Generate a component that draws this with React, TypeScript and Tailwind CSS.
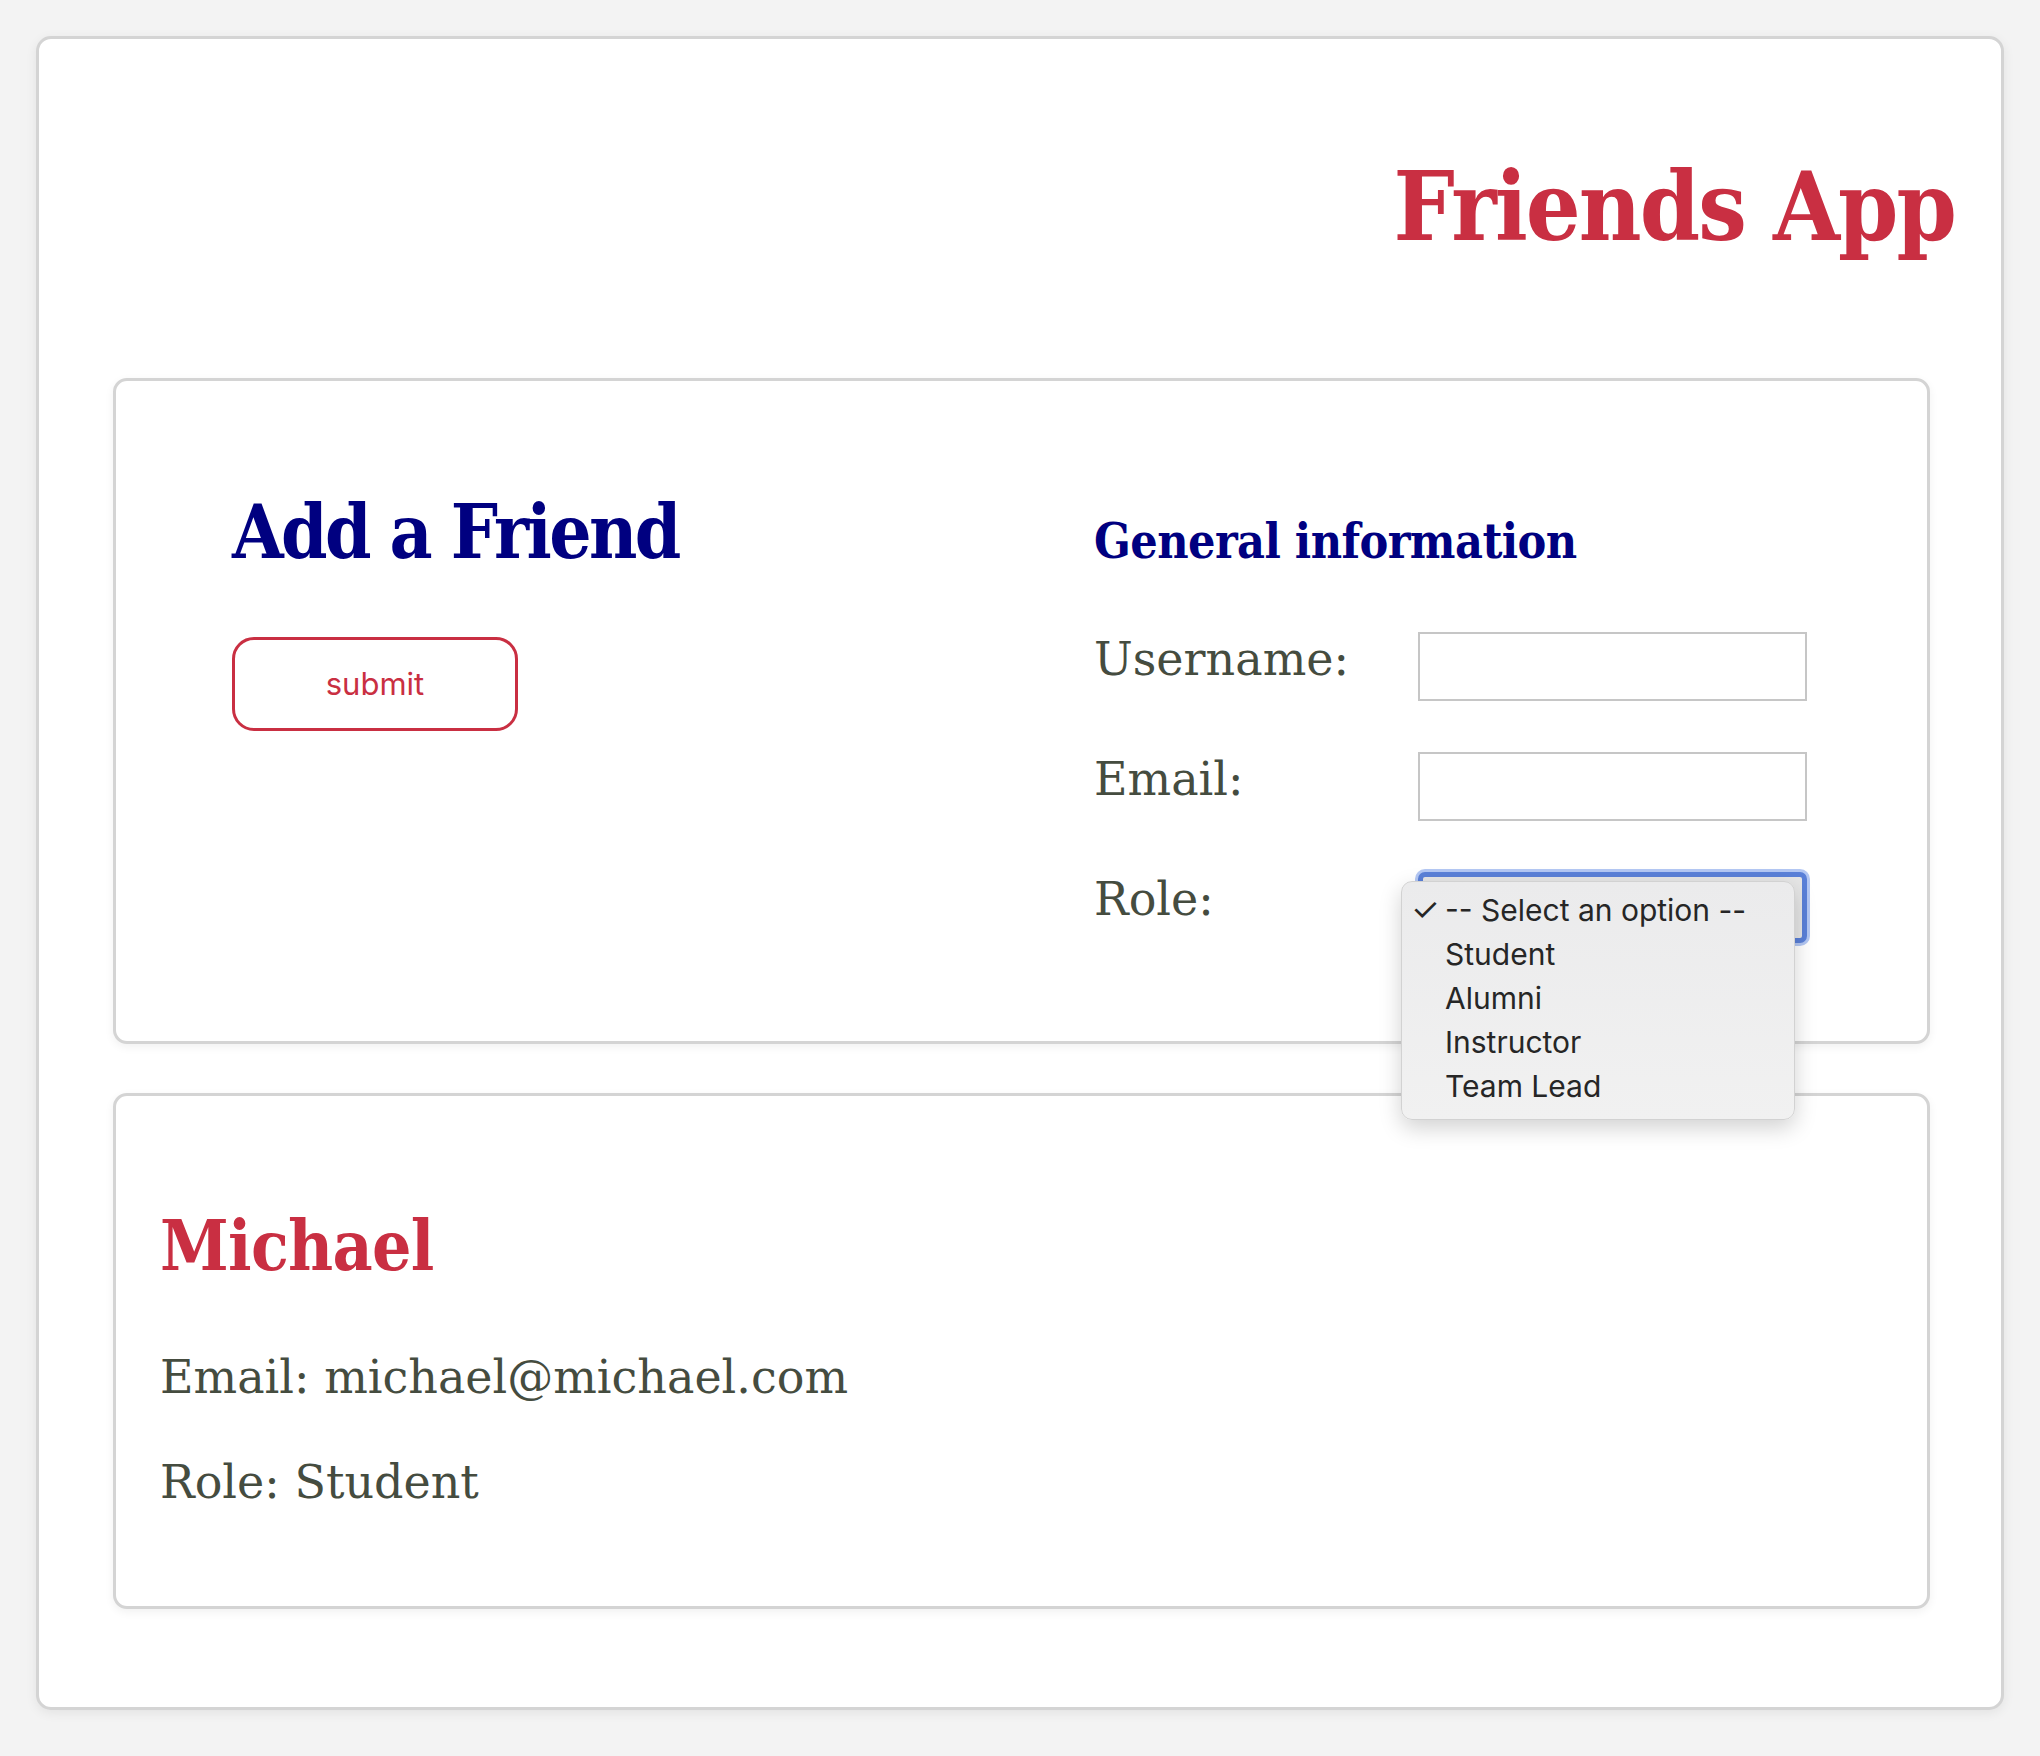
import React, { useState } from 'react';

const roles = ['-- Select an option --', 'Student', 'Alumni', 'Instructor', 'Team Lead'];

interface Friend {
  name: string;
  email: string;
  role: string;
}

const FormRow: React.FC<{ label: string; children: React.ReactNode }> = ({ label, children }) => (
  <div className="flex items-start">
    <label className="w-[324px] mt-[4px] text-[46px] leading-none text-[#454c3f] font-['DejaVu_Serif',serif]">
      {label}
    </label>
    {children}
  </div>
);

const App: React.FC = () => {
  const [friends] = useState<Friend[]>([
    { name: 'Michael', email: 'michael@michael.com', role: 'Student' },
  ]);
  const [selected] = useState(0);

  return (
    <div className="min-h-screen bg-[#f3f3f3] px-[36px] pt-[36px] pb-[50px] font-['DejaVu_Serif',serif]">
      <div className="rounded-[15px] border-[3px] border-[#d4d4d4] bg-white shadow-[0_3px_12px_rgba(0,0,0,0.07)] pb-[98px]">
        <div className="flex justify-end pr-[46px] pt-[120px] mb-[123px]">
          <h1 className="text-[96px] leading-none font-bold tracking-[-0.02em] text-[#c92f42] font-['DejaVu_Serif_Condensed','DejaVu_Serif',serif]">
            Friends App
          </h1>
        </div>

        <div className="pl-[74px] pr-[71px] flex flex-col gap-[49px]">
          {/* add friend form */}
          <div className="rounded-[14px] border-[3px] border-[#d4d4d4] bg-white shadow-[0_3px_10px_rgba(0,0,0,0.06)] flex justify-between pl-[116px] pr-[120px] pb-[98px]">
            <div className="pt-[114px]">
              <h2 className="text-[74px] leading-none font-bold tracking-[-0.035em] text-[#000080] font-['DejaVu_Serif_Condensed','DejaVu_Serif',serif]">
                Add a Friend
              </h2>
              <button className="mt-[68px] w-[286px] h-[94px] rounded-[22px] border-[3px] border-[#c92f42] bg-white text-[#c92f42] text-[31px] font-['Inter',sans-serif]">
                submit
              </button>
            </div>

            <div className="pt-[136px] w-[713px]">
              <h3 className="text-[48px] leading-none font-bold tracking-[-0.012em] text-[#000080] font-['DejaVu_Serif_Condensed','DejaVu_Serif',serif]">
                General information
              </h3>
              <div className="mt-[67px] flex flex-col gap-[51px]">
                <FormRow label="Username:">
                  <input className="w-[389px] h-[69px] border-2 border-[#c6c6c6] bg-white outline-none" />
                </FormRow>
                <FormRow label="Email:">
                  <input className="w-[389px] h-[69px] border-2 border-[#c6c6c6] bg-white outline-none" />
                </FormRow>
                <FormRow label="Role:">
                  <div className="relative w-[389px] h-[71px]">
                    <div className="w-full h-full rounded-[7px] border-[5px] border-[#5a80d8] ring-[3px] ring-[#b3c7f3] bg-[#e6e6e6]" />
                    <div className="absolute left-[-17px] top-[9px] w-[394px] rounded-[11px] border border-[#d2d2d2] bg-gradient-to-b from-[#ebebec] to-[#f1f1f1] shadow-[0_8px_22px_rgba(0,0,0,0.18)] pt-[6px] pb-[11px] font-['Inter',sans-serif] text-[30px] text-[#262626]">
                      {roles.map((r, i) => (
                        <div key={r} className="flex items-center h-[44px]">
                          <span className="w-[43px] pl-[9px] text-[32px] leading-none">{i === selected ? '✓' : ''}</span>
                          <span>{r}</span>
                        </div>
                      ))}
                    </div>
                  </div>
                </FormRow>
              </div>
            </div>
          </div>

          {/* friends list */}
          {friends.map((f) => (
            <div
              key={f.email}
              className="rounded-[14px] border-[3px] border-[#d4d4d4] bg-white shadow-[0_3px_10px_rgba(0,0,0,0.06)] pl-[44px] pt-[115px] pb-[101px]"
            >
              <h2 className="text-[69px] leading-none font-bold tracking-[-0.01em] text-[#c92f42] font-['DejaVu_Serif_Condensed','DejaVu_Serif',serif]">
                {f.name}
              </h2>
              <p className="mt-[74px] text-[46px] leading-none text-[#454c3f]">Email: {f.email}</p>
              <p className="mt-[59px] text-[46px] leading-none text-[#454c3f]">Role: {f.role}</p>
            </div>
          ))}
        </div>
      </div>
    </div>
  );
};

export default App;
